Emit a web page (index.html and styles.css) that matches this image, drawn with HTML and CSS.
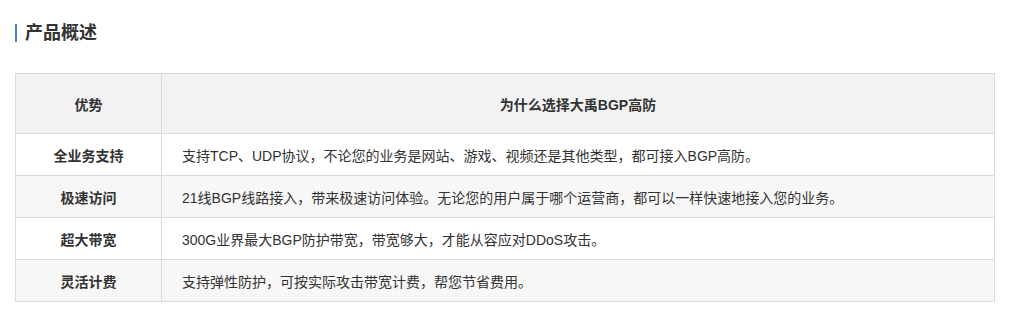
FILE: index.html
```html
<!DOCTYPE html>
<html lang="zh-CN">
<head>
<meta charset="utf-8">
<link rel="stylesheet" href="styles.css">
</head>
<body>
<div class="page">
  <h2 class="title">产品概述</h2>
  <table class="adv">
    <thead>
      <tr><th class="c1">优势</th><th>为什么选择大禹BGP高防</th></tr>
    </thead>
    <tbody>
      <tr><td class="c1">全业务支持</td><td>支持TCP、UDP协议，不论您的业务是网站、游戏、视频还是其他类型，都可接入BGP高防。</td></tr>
      <tr class="alt"><td class="c1">极速访问</td><td>21线BGP线路接入，带来极速访问体验。无论您的用户属于哪个运营商，都可以一样快速地接入您的业务。</td></tr>
      <tr><td class="c1">超大带宽</td><td>300G业界最大BGP防护带宽，带宽够大，才能从容应对DDoS攻击。</td></tr>
      <tr class="alt"><td class="c1">灵活计费</td><td>支持弹性防护，可按实际攻击带宽计费，帮您节省费用。</td></tr>
    </tbody>
  </table>
</div>
</body>
</html>
```

FILE: styles.css
```css
html, body {
  margin: 0;
  padding: 0;
  background: #fff;
}
body {
  font-family: "Liberation Sans", "Noto Sans CJK SC", sans-serif;
  color: #333;
}
.page {
  padding: 24px 23px 0 15px;
}
.title {
  margin: 0;
  height: 18px;
  line-height: 18px;
  border-left: 2px solid #3a87c8;
  padding-left: 8px;
  font-size: 18px;
  font-weight: bold;
  color: #333;
}
.adv {
  margin-top: 31px;
  width: 980px;
  border-collapse: collapse;
  font-size: 14px;
}
.adv th, .adv td {
  border: 1px solid #dadada;
  padding: 0 0 0 20px;
  text-align: left;
  color: #333;
}
.adv th {
  height: 59px;
  background: #f2f2f2;
  font-weight: bold;
  text-align: center;
  padding: 0;
}
.adv td {
  height: 41px;
  background: #fff;
}
.adv tr.alt td {
  background: #f7f7f7;
}
.adv .c1 {
  width: 145px;
  padding: 0;
  text-align: center;
  font-weight: bold;
}
```
